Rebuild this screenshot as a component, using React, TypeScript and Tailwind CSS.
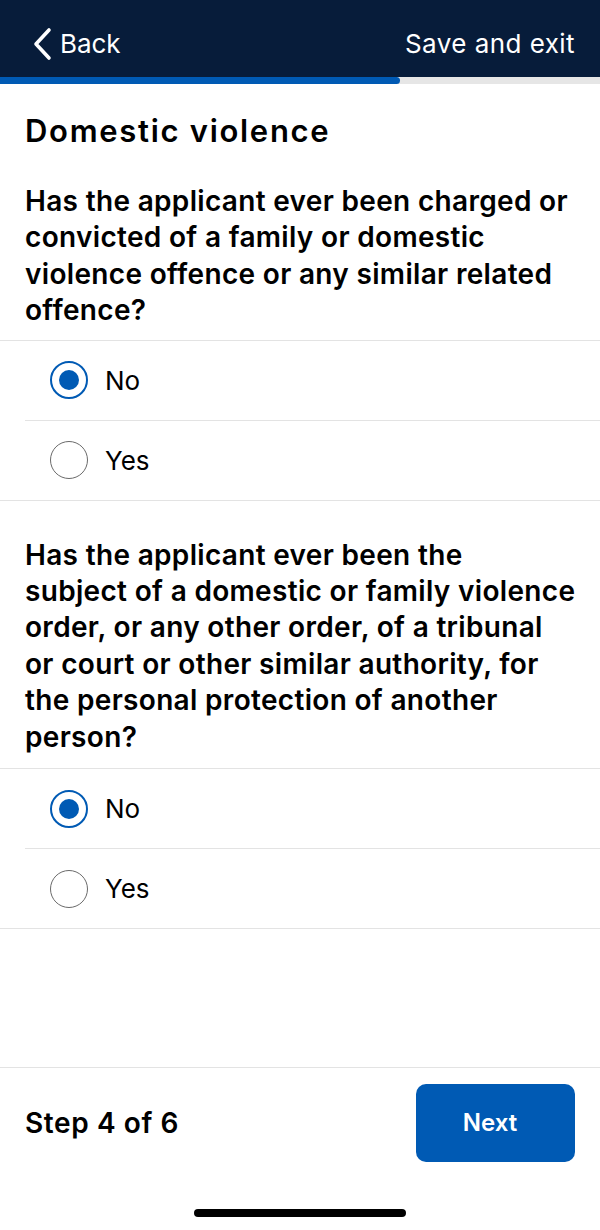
import React from "react"

type Option = { label: string; checked: boolean }

const font = { fontFamily: "Inter, 'Noto Sans', sans-serif" }

const Radio = ({ checked }: { checked: boolean }) => {
    if (checked) {
        return (
            <span className="flex items-center justify-center w-[38px] h-[38px] rounded-full border-[2px] border-[#005ab4]">
                <span className="w-[20px] h-[20px] rounded-full bg-[#005ab4]" />
            </span>
        )
    }
    return <span className="block w-[38px] h-[38px] rounded-full border-[1.5px] border-[#6a6a6a]" />
}

const Question = ({ lines, options, pad }: { lines: string[]; options: Option[]; pad: string }) => {
    return (
        <div>
            <p className={`px-[25px] ${pad} text-[28px] leading-[36.4px] font-semibold text-black tracking-[0.32px] whitespace-nowrap`}>
                {lines.map((l, i) => (
                    <React.Fragment key={i}>
                        {l}
                        {i < lines.length - 1 && <br />}
                    </React.Fragment>
                ))}
            </p>
            <div className="border-t border-b border-[#e3e3e3]">
                {options.map((o, i) => (
                    <div key={o.label} className={i > 0 ? "ml-[25px] border-t border-[#e3e3e3]" : ""}>
                        <div className={`flex items-center h-[79px] ${i > 0 ? "pl-[25px]" : "pl-[50px]"} gap-[17px]`}>
                            <Radio checked={o.checked} />
                            <span className="text-[26px] text-black">{o.label}</span>
                        </div>
                    </div>
                ))}
            </div>
        </div>
    )
}

export default function App() {
    const opts: Option[] = [
        { label: "No", checked: true },
        { label: "Yes", checked: false },
    ]

    return (
        <div className="w-[600px] h-[1230px] flex flex-col bg-white overflow-hidden" style={font}>
            {/* header */}
            <div className="h-[77px] bg-[#071c3a] flex items-center justify-between px-[25px] pt-[10px]">
                <div className="flex items-center gap-[5px] text-white">
                    <svg width="24" height="34" viewBox="0 0 24 34" className="ml-[6px]">
                        <polyline points="18,3 5,17 18,31" fill="none" stroke="white" strokeWidth="3.6" strokeLinecap="round" strokeLinejoin="round" />
                    </svg>
                    <span className="text-[26px] tracking-[-0.1px]">Back</span>
                </div>
                <span className="text-[26px] text-white tracking-[0.45px]">Save and exit</span>
            </div>

            {/* progress */}
            <div className="h-[7px] bg-[#e6e6e6]">
                <div className="h-full w-[400px] bg-[#005ab4] rounded-r-full" />
            </div>

            <div className="flex-1">
                <h1 className="px-[25px] mt-[29px] text-[31px] leading-[36px] font-semibold text-black tracking-[1.7px]">
                    Domestic violence
                </h1>
                <Question
                    pad="pt-[34px] pb-[11px]"
                    lines={[
                        "Has the applicant ever been charged or",
                        "convicted of a family or domestic",
                        "violence offence or any similar related",
                        "offence?",
                    ]}
                    options={opts}
                />
                <Question
                    pad="pt-[36px] pb-[13px]"
                    lines={[
                        "Has the applicant ever been the",
                        "subject of a domestic or family violence",
                        "order, or any other order, of a tribunal",
                        "or court or other similar authority, for",
                        "the personal protection of another",
                        "person?",
                    ]}
                    options={opts}
                />
            </div>

            {/* footer */}
            <div className="border-t border-[#e3e3e3] pt-[16px]">
                <div className="flex items-center justify-between px-[25px]">
                    <span className="text-[28px] font-semibold text-black tracking-[0.6px]">Step 4 of 6</span>
                    <button className="w-[159px] h-[78px] rounded-[10px] bg-[#005ab4] text-white text-[24px] font-semibold pr-[11px]">
                        Next
                    </button>
                </div>
                <div className="flex justify-center mt-[47px] mb-[13px]">
                    <div className="w-[212px] h-[8px] rounded-full bg-black" />
                </div>
            </div>
        </div>
    )
}
